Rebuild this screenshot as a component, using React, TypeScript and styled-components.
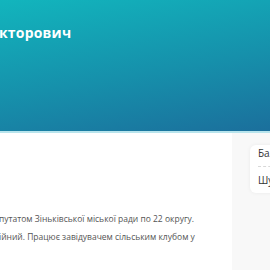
import React from "react";
import styled, { createGlobalStyle } from "styled-components";

const Global = createGlobalStyle`
  html, body { margin: 0; padding: 0; background: #ffffff; overflow: hidden; }
  body { font-family: "Open Sans", "Noto Sans", sans-serif; }
`;

const Page = styled.div`
  width: 270px;
  height: 270px;
  overflow: hidden;
  display: flex;
  flex-direction: column;
`;

const Hero = styled.header`
  height: 131px;
  flex: none;
  background: linear-gradient(170deg, #12b5bd 0%, #1690ab 55%, #1b6f9c 100%);
  border-bottom: 2px solid #b8e4ec;
  box-sizing: content-box;
  overflow: hidden;
`;

const Title = styled.h1`
  margin: 21px 0 0 -1px;
  padding: 0;
  font-size: 14px;
  font-weight: 700;
  line-height: 24px;
  color: #ffffff;
  white-space: nowrap;
  letter-spacing: 0.2px;
`;

const Main = styled.main`
  flex: 1;
  display: grid;
  grid-template-columns: 232px 1fr;
`;

const Content = styled.section`
  padding-top: 77px;
  overflow: hidden;
`;

const Bio = styled.p`
  margin: 0 0 0 -1px;
  font-size: 8.5px;
  line-height: 18px;
  color: #555555;
  white-space: nowrap;
`;

const Sidebar = styled.aside`
  background: #f8f8f8;
  padding: 12px 0 0 18px;
  overflow: hidden;
`;

const Card = styled.div`
  background: #ffffff;
  border-radius: 6px 0 0 6px;
  box-shadow: 0 0 4px rgba(0, 0, 0, 0.06);
  padding: 0 0 0 8px;
  width: 80px;
`;

const Item = styled.div<{ $divider?: boolean }>`
  font-size: 10px;
  line-height: 16px;
  color: #333333;
  white-space: nowrap;
  border-top: ${(p) => (p.$divider ? "1px dashed #d8d8d8" : "none")};
  padding: ${(p) => (p.$divider ? "5px 0" : "0 0 5px")};
`;

export default function App() {
  return (
    <Page>
      <Global />
      <Hero>
        <Title>кторович</Title>
      </Hero>
      <Main>
        <Content>
          <Bio>
            путатом Зіньківської міської ради по 22 округу.
            <br />
            ійний. Працює завідувачем сільським клубом у
          </Bio>
        </Content>
        <Sidebar>
          <Card>
            <Item>Балки</Item>
            <Item $divider>Шуляк</Item>
          </Card>
        </Sidebar>
      </Main>
    </Page>
  );
}
